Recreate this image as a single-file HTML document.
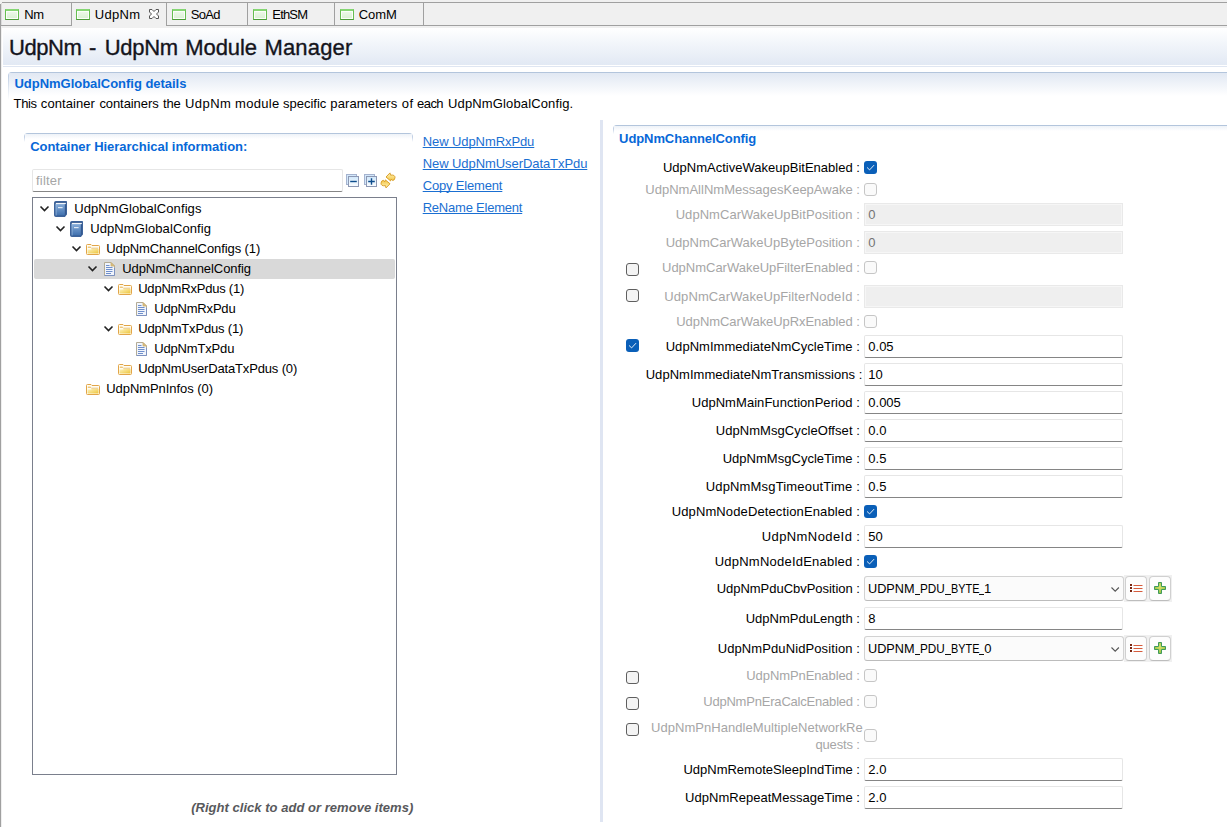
<!DOCTYPE html><html lang="en"><head><meta charset="utf-8"><title>UdpNm - UdpNm Module Manager</title><style>
html,body{margin:0;padding:0}
body{width:1227px;height:827px;position:relative;overflow:hidden;background:#fff;font-family:"Liberation Sans",sans-serif;font-size:13px;color:#000}
div,span,a{position:absolute;box-sizing:border-box}
.t{white-space:nowrap;line-height:normal}
#tabbar{left:0;top:0;width:1227px;height:28px;background:#f0f0f0}
#tabbar .topline{left:2px;top:2px;width:1225px;height:1px;background:#a0a0a0}
#tabbar .botline{top:25px;height:1px;background:#a0a0a0}
.tabsep{top:3px;width:1px;height:22px;background:#a0a0a0}
.ticon{top:9px;width:14px;height:11px;border:1px solid #66be50;border-top:2px solid #86d674;border-bottom-color:#4a9a36;background:linear-gradient(#eef9eb,#d9f0d2);box-shadow:inset 0 0 0 1px #fbfefa}
#leftedge{left:0;top:4px;width:1px;height:823px;background:#a0a0a0}
#leftedge2{left:1px;top:3px;width:1px;height:22px;background:#dcdcdc}
#leftedge3{left:1px;top:26px;width:1px;height:801px;background:#efefef}
#head{left:3px;top:28px;width:1224px;height:37px;background:linear-gradient(#ffffff 0%,#f4f7fb 35%,#e2e9f4 100%)}
#headline{left:3px;top:66px;width:1224px;height:1px;background:#dfe6f2}
.sec{border-top:1px solid #b3c5dc;border-left:1px solid #c0cfe4;border-top-left-radius:4px}
.sec:before{content:'';position:absolute;left:-1px;top:3px;width:1px;bottom:0;background:linear-gradient(rgba(255,255,255,0),#fff)}
.sec.r{border-right:1px solid #c0cfe4;border-top-right-radius:4px}
.sec.r:after{content:'';position:absolute;right:-1px;top:3px;width:1px;bottom:0;background:linear-gradient(rgba(255,255,255,0),#fff)}
.secgrad{left:0;top:0;right:0}
.fld{height:23px;background:#fff;border:1px solid #e6e6e6;border-bottom:1px solid #858585;border-radius:2px}
.fld.dis{background:#efefef;border:1px solid #e9e9e9;box-shadow:inset 0 0 0 1px #f6f6f6;border-radius:0}
.cb{width:13px;height:13px;border-radius:3px}
.cb.on{background:#0a5fb8}
.cb.off{background:#f4f4f4;border:1px solid #5f5f5f}
.cb.dis{background:#fafafa;border:1px solid #c6c6c6}
.combo{height:25px;background:#fbfbfb;border:1px solid #d2d2d2;border-bottom-color:#bcbcbc;border-radius:3px}
.tb{width:48px;height:27px;background:#f0f0f0}
.btn{width:22px;height:25px;background:#fdfdfd;border:1px solid #d0d0d0;border-bottom-color:#bdbdbd;border-radius:4px}
svg{position:absolute;overflow:visible}
</style></head><body>
<div id="tabbar"><div class="topline"></div>
<div class="botline" style="left:0;width:72px"></div><div class="botline" style="left:166px;width:1061px"></div>
<div class="tabsep" style="left:71px"></div>
<div class="tabsep" style="left:166px"></div>
<div class="tabsep" style="left:247px"></div>
<div class="tabsep" style="left:334px"></div>
<div class="tabsep" style="left:423px"></div>
<div class="ticon" style="left:5px"></div>
<div class="ticon" style="left:76px"></div>
<div class="ticon" style="left:172px"></div>
<div class="ticon" style="left:253px"></div>
<div class="ticon" style="left:340px"></div>
<span class="t" style="top:7px;font-size:13px;left:24.2px;letter-spacing:-0.42px;">Nm</span>
<span class="t" style="top:7px;font-size:13px;left:94.7px;letter-spacing:0.36px;">UdpNm</span>
<span class="t" style="top:7px;font-size:13px;left:190.7px;letter-spacing:-0.67px;">SoAd</span>
<span class="t" style="top:7px;font-size:13px;left:272.3px;letter-spacing:-0.83px;">EthSM</span>
<span class="t" style="top:7px;font-size:13px;left:358.7px;letter-spacing:-0.06px;">ComM</span>
<svg style="left:149px;top:9px" width="10" height="10" viewBox="0 0 10 10"><path d="M0.5 0.5 H3 L5 2.5 L7 0.5 H9.5 V3 L7.5 5 L9.5 7 V9.5 H7 L5 7.5 L3 9.5 H0.5 V7 L2.5 5 L0.5 3Z" fill="#fff" stroke="#565656" stroke-width="1"/></svg>
</div>
<div id="leftedge"></div><div id="leftedge2"></div><div id="leftedge3"></div>
<div id="head"></div><div id="headline"></div>
<span class="t" style="top:35px;font-size:22px;color:#14141c;left:8.9px;letter-spacing:-0.39px;-webkit-text-stroke:0.35px #14141c;">UdpNm</span>
<span class="t" style="top:35px;font-size:22px;color:#14141c;left:89.0px;letter-spacing:1.67px;-webkit-text-stroke:0.35px #14141c;">-</span>
<span class="t" style="top:35px;font-size:22px;color:#14141c;left:104.8px;letter-spacing:-0.32px;-webkit-text-stroke:0.35px #14141c;">UdpNm</span>
<span class="t" style="top:35px;font-size:22px;color:#14141c;left:185.2px;letter-spacing:-0.05px;-webkit-text-stroke:0.35px #14141c;">Module</span>
<span class="t" style="top:35px;font-size:22px;color:#14141c;left:264.4px;letter-spacing:0.19px;-webkit-text-stroke:0.35px #14141c;">Manager</span>
<div class="sec" style="left:8px;top:72px;width:1219px;height:28px;"><div class="secgrad" style="height:23px;background:linear-gradient(#e1e8f3,#ffffff)"></div></div>
<span class="t" style="top:76px;font-size:13px;font-weight:bold;color:#0768d8;left:14.5px;letter-spacing:-0.03px;">UdpNmGlobalConfig details</span>
<span class="t" style="top:96px;font-size:13px;left:13.6px;letter-spacing:-0.39px;">This</span>
<span class="t" style="top:96px;font-size:13px;left:40.8px;letter-spacing:0.08px;">container</span>
<span class="t" style="top:96px;font-size:13px;left:99.4px;letter-spacing:-0.08px;">containers</span>
<span class="t" style="top:96px;font-size:13px;left:163.0px;letter-spacing:-0.19px;">the</span>
<span class="t" style="top:96px;font-size:13px;left:185.0px;letter-spacing:0.43px;">UdpNm</span>
<span class="t" style="top:96px;font-size:13px;left:235.1px;letter-spacing:0.29px;">module</span>
<span class="t" style="top:96px;font-size:13px;left:283.1px;letter-spacing:-0.02px;">specific</span>
<span class="t" style="top:96px;font-size:13px;left:330.3px;letter-spacing:0.13px;">parameters</span>
<span class="t" style="top:96px;font-size:13px;left:401.7px;letter-spacing:0.56px;">of</span>
<span class="t" style="top:96px;font-size:13px;left:417.1px;letter-spacing:-0.57px;">each</span>
<span class="t" style="top:96px;font-size:13px;left:448.1px;letter-spacing:0.13px;">UdpNmGlobalConfig.</span>
<div class="sec r" style="left:24px;top:133px;width:389px;height:9px"><div class="secgrad" style="height:5px;background:linear-gradient(#eef2f8,#ffffff)"></div></div>
<span class="t" style="top:139px;font-size:13px;font-weight:bold;color:#0768d8;left:30.2px;letter-spacing:-0.03px;">Container Hierarchical information:</span>
<div class="fld" style="left:32px;top:169px;width:311px"></div>
<span class="t" style="top:173px;font-size:13px;color:#a6a6a6;left:36px;letter-spacing:0.19px;">filter</span>
<svg style="left:346px;top:174px" width="13" height="13" viewBox="0 0 13 13"><defs><linearGradient id="sq" x1="0" y1="0" x2="0" y2="1"><stop offset="0" stop-color="#cfe7fb"/><stop offset="1" stop-color="#fbfdff"/></linearGradient></defs><rect x="0.5" y="0.5" width="10" height="10" fill="#d3e8fb" stroke="#a5b3cf"/><rect x="2.5" y="2.5" width="10" height="10" fill="url(#sq)" stroke="#8d98b3"/><path d="M4.2 7.5 H10.8" stroke="#0d4c8c" stroke-width="1.4"/></svg>
<svg style="left:364px;top:174px" width="13" height="13" viewBox="0 0 13 13"><defs><linearGradient id="sq" x1="0" y1="0" x2="0" y2="1"><stop offset="0" stop-color="#cfe7fb"/><stop offset="1" stop-color="#fbfdff"/></linearGradient></defs><rect x="0.5" y="0.5" width="10" height="10" fill="#d3e8fb" stroke="#a5b3cf"/><rect x="2.5" y="2.5" width="10" height="10" fill="url(#sq)" stroke="#8d98b3"/><path d="M4.2 7.5 H10.8 M7.5 4.2 V10.8" stroke="#0d4c8c" stroke-width="1.4"/></svg>
<svg style="left:380px;top:172px" width="16" height="17" viewBox="0 0 16 17"><defs><linearGradient id="ar" x1="0" y1="0" x2="0" y2="1"><stop offset="0" stop-color="#fff4b8"/><stop offset="1" stop-color="#f3c443"/></linearGradient></defs>
<path d="M6 5 L10 0.9 L10.5 3.1 Q15 2.5 15 5.6 Q14.8 8.3 12.6 8.5 L11.3 7 L10.6 8.9 Z" fill="url(#ar)" stroke="#d6981f" stroke-width="0.9" stroke-linejoin="round"/>
<path transform="rotate(180 8 8.4)" d="M6 5 L10 0.9 L10.5 3.1 Q15 2.5 15 5.6 Q14.8 8.3 12.6 8.5 L11.3 7 L10.6 8.9 Z" fill="url(#ar)" stroke="#d6981f" stroke-width="0.9" stroke-linejoin="round"/></svg>
<div id="tree" style="left:32px;top:197px;width:365px;height:578px;border:1px solid #7a7f8c;background:#fff"></div>
<div style="left:34px;top:259px;width:361px;height:20px;background:#d9d9d9;border-radius:2px"></div>
<svg style="left:40px;top:206px" width="9" height="5.6" viewBox="0 0 9 5.6"><path d="M0.5 0.5 L4.5 4.6 L8.5 0.5" fill="none" stroke="#222222" stroke-width="1.6"/></svg>
<svg style="left:54px;top:201px" width="13" height="16" viewBox="0 0 13 16">
<defs><linearGradient id="bk" x1="0" y1="0" x2="0" y2="1"><stop offset="0" stop-color="#86acd9"/><stop offset="1" stop-color="#3f70ae"/></linearGradient></defs>
<path d="M1.6 0.5 H12.5 V13.2 L11 15.5 H1.6 Q0.5 15.5 0.5 14.4 V1.6 Q0.5 0.5 1.6 0.5Z" fill="#35598f" stroke="#3d639b" stroke-width="1"/>
<rect x="1.5" y="3" width="9.3" height="11.5" fill="url(#bk)"/>
<rect x="1.5" y="3" width="1.2" height="11.5" fill="#9fbde3" opacity=".55"/>
<rect x="1.8" y="1.9" width="10" height="1.2" fill="#f4f7fb"/>
<rect x="4" y="6" width="4.6" height="1.2" fill="#dfe9f5"/>
</svg>
<span class="t" style="top:201px;font-size:13px;left:74.2px;letter-spacing:0.09px;">UdpNmGlobalConfigs</span>
<svg style="left:56px;top:226px" width="9" height="5.6" viewBox="0 0 9 5.6"><path d="M0.5 0.5 L4.5 4.6 L8.5 0.5" fill="none" stroke="#222222" stroke-width="1.6"/></svg>
<svg style="left:70px;top:221px" width="13" height="16" viewBox="0 0 13 16">
<defs><linearGradient id="bk" x1="0" y1="0" x2="0" y2="1"><stop offset="0" stop-color="#86acd9"/><stop offset="1" stop-color="#3f70ae"/></linearGradient></defs>
<path d="M1.6 0.5 H12.5 V13.2 L11 15.5 H1.6 Q0.5 15.5 0.5 14.4 V1.6 Q0.5 0.5 1.6 0.5Z" fill="#35598f" stroke="#3d639b" stroke-width="1"/>
<rect x="1.5" y="3" width="9.3" height="11.5" fill="url(#bk)"/>
<rect x="1.5" y="3" width="1.2" height="11.5" fill="#9fbde3" opacity=".55"/>
<rect x="1.8" y="1.9" width="10" height="1.2" fill="#f4f7fb"/>
<rect x="4" y="6" width="4.6" height="1.2" fill="#dfe9f5"/>
</svg>
<span class="t" style="top:221px;font-size:13px;left:90.2px;letter-spacing:0.1px;">UdpNmGlobalConfig</span>
<svg style="left:72px;top:246px" width="9" height="5.6" viewBox="0 0 9 5.6"><path d="M0.5 0.5 L4.5 4.6 L8.5 0.5" fill="none" stroke="#222222" stroke-width="1.6"/></svg>
<svg style="left:86px;top:244px" width="14" height="11" viewBox="0 0 14 11">
<defs><linearGradient id="fd" x1="0" y1="0" x2="1" y2="1"><stop offset="0" stop-color="#fdf3c0"/><stop offset="1" stop-color="#eec53a"/></linearGradient></defs>
<path d="M0.5 1.4 Q0.5 0.5 1.4 0.5 H5 L6 1.5 H12.6 Q13.5 1.5 13.5 2.4 V9.6 Q13.5 10.5 12.6 10.5 H1.4 Q0.5 10.5 0.5 9.6Z" fill="#fffdf3" stroke="#e2a548" stroke-width="1"/>
<path d="M1.8 3.4 H4.6 L5.4 4.2 H12.2" fill="none" stroke="#e9c27a" stroke-width="1"/>
<path d="M2 2.6 H4.6 V4 H2Z" fill="#efc77a"/>
<path d="M1.5 5.6 L5 5.6 L5.8 4.9 H12.5 V9.6 H1.5Z" fill="url(#fd)"/>
</svg>
<span class="t" style="top:241px;font-size:13px;left:106.2px;letter-spacing:-0.09px;">UdpNmChannelConfigs (1)</span>
<svg style="left:88px;top:266px" width="9" height="5.6" viewBox="0 0 9 5.6"><path d="M0.5 0.5 L4.5 4.6 L8.5 0.5" fill="none" stroke="#222222" stroke-width="1.6"/></svg>
<svg style="left:104px;top:262px" width="11" height="14" viewBox="0 0 11 14">
<path d="M0.5 0.5 H7 L10.5 4 V13.5 H0.5Z" fill="#f1f5fc" stroke="#b3ab96" stroke-width="1"/>
<path d="M0.5 13.5 H10.5 V6" fill="none" stroke="#7d92c0" stroke-width="1"/>
<path d="M7 0.5 L10.5 4 H7Z" fill="#dcbf7c" stroke="#c9ad72" stroke-width="0.8"/>
<path d="M2 3.5 H5.5 M2 5.5 H8.5 M2 7.5 H8.5 M2 9.5 H8.5 M2 11.5 H7" stroke="#6f8fcc" stroke-width="1"/>
</svg>
<span class="t" style="top:261px;font-size:13px;left:122.2px;letter-spacing:-0.07px;">UdpNmChannelConfig</span>
<svg style="left:104px;top:286px" width="9" height="5.6" viewBox="0 0 9 5.6"><path d="M0.5 0.5 L4.5 4.6 L8.5 0.5" fill="none" stroke="#222222" stroke-width="1.6"/></svg>
<svg style="left:118px;top:284px" width="14" height="11" viewBox="0 0 14 11">
<defs><linearGradient id="fd" x1="0" y1="0" x2="1" y2="1"><stop offset="0" stop-color="#fdf3c0"/><stop offset="1" stop-color="#eec53a"/></linearGradient></defs>
<path d="M0.5 1.4 Q0.5 0.5 1.4 0.5 H5 L6 1.5 H12.6 Q13.5 1.5 13.5 2.4 V9.6 Q13.5 10.5 12.6 10.5 H1.4 Q0.5 10.5 0.5 9.6Z" fill="#fffdf3" stroke="#e2a548" stroke-width="1"/>
<path d="M1.8 3.4 H4.6 L5.4 4.2 H12.2" fill="none" stroke="#e9c27a" stroke-width="1"/>
<path d="M2 2.6 H4.6 V4 H2Z" fill="#efc77a"/>
<path d="M1.5 5.6 L5 5.6 L5.8 4.9 H12.5 V9.6 H1.5Z" fill="url(#fd)"/>
</svg>
<span class="t" style="top:281px;font-size:13px;left:138.2px;letter-spacing:-0.21px;">UdpNmRxPdus (1)</span>
<svg style="left:136px;top:302px" width="11" height="14" viewBox="0 0 11 14">
<path d="M0.5 0.5 H7 L10.5 4 V13.5 H0.5Z" fill="#f1f5fc" stroke="#b3ab96" stroke-width="1"/>
<path d="M0.5 13.5 H10.5 V6" fill="none" stroke="#7d92c0" stroke-width="1"/>
<path d="M7 0.5 L10.5 4 H7Z" fill="#dcbf7c" stroke="#c9ad72" stroke-width="0.8"/>
<path d="M2 3.5 H5.5 M2 5.5 H8.5 M2 7.5 H8.5 M2 9.5 H8.5 M2 11.5 H7" stroke="#6f8fcc" stroke-width="1"/>
</svg>
<span class="t" style="top:301px;font-size:13px;left:154.2px;letter-spacing:-0.18px;">UdpNmRxPdu</span>
<svg style="left:104px;top:326px" width="9" height="5.6" viewBox="0 0 9 5.6"><path d="M0.5 0.5 L4.5 4.6 L8.5 0.5" fill="none" stroke="#222222" stroke-width="1.6"/></svg>
<svg style="left:118px;top:324px" width="14" height="11" viewBox="0 0 14 11">
<defs><linearGradient id="fd" x1="0" y1="0" x2="1" y2="1"><stop offset="0" stop-color="#fdf3c0"/><stop offset="1" stop-color="#eec53a"/></linearGradient></defs>
<path d="M0.5 1.4 Q0.5 0.5 1.4 0.5 H5 L6 1.5 H12.6 Q13.5 1.5 13.5 2.4 V9.6 Q13.5 10.5 12.6 10.5 H1.4 Q0.5 10.5 0.5 9.6Z" fill="#fffdf3" stroke="#e2a548" stroke-width="1"/>
<path d="M1.8 3.4 H4.6 L5.4 4.2 H12.2" fill="none" stroke="#e9c27a" stroke-width="1"/>
<path d="M2 2.6 H4.6 V4 H2Z" fill="#efc77a"/>
<path d="M1.5 5.6 L5 5.6 L5.8 4.9 H12.5 V9.6 H1.5Z" fill="url(#fd)"/>
</svg>
<span class="t" style="top:321px;font-size:13px;left:138.2px;letter-spacing:-0.18px;">UdpNmTxPdus (1)</span>
<svg style="left:136px;top:342px" width="11" height="14" viewBox="0 0 11 14">
<path d="M0.5 0.5 H7 L10.5 4 V13.5 H0.5Z" fill="#f1f5fc" stroke="#b3ab96" stroke-width="1"/>
<path d="M0.5 13.5 H10.5 V6" fill="none" stroke="#7d92c0" stroke-width="1"/>
<path d="M7 0.5 L10.5 4 H7Z" fill="#dcbf7c" stroke="#c9ad72" stroke-width="0.8"/>
<path d="M2 3.5 H5.5 M2 5.5 H8.5 M2 7.5 H8.5 M2 9.5 H8.5 M2 11.5 H7" stroke="#6f8fcc" stroke-width="1"/>
</svg>
<span class="t" style="top:341px;font-size:13px;left:154.2px;letter-spacing:-0.16px;">UdpNmTxPdu</span>
<svg style="left:118px;top:364px" width="14" height="11" viewBox="0 0 14 11">
<defs><linearGradient id="fd" x1="0" y1="0" x2="1" y2="1"><stop offset="0" stop-color="#fdf3c0"/><stop offset="1" stop-color="#eec53a"/></linearGradient></defs>
<path d="M0.5 1.4 Q0.5 0.5 1.4 0.5 H5 L6 1.5 H12.6 Q13.5 1.5 13.5 2.4 V9.6 Q13.5 10.5 12.6 10.5 H1.4 Q0.5 10.5 0.5 9.6Z" fill="#fffdf3" stroke="#e2a548" stroke-width="1"/>
<path d="M1.8 3.4 H4.6 L5.4 4.2 H12.2" fill="none" stroke="#e9c27a" stroke-width="1"/>
<path d="M2 2.6 H4.6 V4 H2Z" fill="#efc77a"/>
<path d="M1.5 5.6 L5 5.6 L5.8 4.9 H12.5 V9.6 H1.5Z" fill="url(#fd)"/>
</svg>
<span class="t" style="top:361px;font-size:13px;left:138.2px;letter-spacing:-0.16px;">UdpNmUserDataTxPdus (0)</span>
<svg style="left:86px;top:384px" width="14" height="11" viewBox="0 0 14 11">
<defs><linearGradient id="fd" x1="0" y1="0" x2="1" y2="1"><stop offset="0" stop-color="#fdf3c0"/><stop offset="1" stop-color="#eec53a"/></linearGradient></defs>
<path d="M0.5 1.4 Q0.5 0.5 1.4 0.5 H5 L6 1.5 H12.6 Q13.5 1.5 13.5 2.4 V9.6 Q13.5 10.5 12.6 10.5 H1.4 Q0.5 10.5 0.5 9.6Z" fill="#fffdf3" stroke="#e2a548" stroke-width="1"/>
<path d="M1.8 3.4 H4.6 L5.4 4.2 H12.2" fill="none" stroke="#e9c27a" stroke-width="1"/>
<path d="M2 2.6 H4.6 V4 H2Z" fill="#efc77a"/>
<path d="M1.5 5.6 L5 5.6 L5.8 4.9 H12.5 V9.6 H1.5Z" fill="url(#fd)"/>
</svg>
<span class="t" style="top:381px;font-size:13px;left:106.2px;letter-spacing:-0.05px;">UdpNmPnInfos (0)</span>
<span class="t" style="top:134px;font-size:13px;color:#1a6fd2;text-decoration:underline;left:422.7px;letter-spacing:-0.08px;text-underline-offset:1px;text-decoration-skip-ink:none;text-decoration-thickness:1px;">New UdpNmRxPdu</span>
<span class="t" style="top:156px;font-size:13px;color:#1a6fd2;text-decoration:underline;left:422.7px;letter-spacing:-0.07px;text-underline-offset:1px;text-decoration-skip-ink:none;text-decoration-thickness:1px;">New UdpNmUserDataTxPdu</span>
<span class="t" style="top:178px;font-size:13px;color:#1a6fd2;text-decoration:underline;left:422.7px;letter-spacing:-0.17px;text-underline-offset:1px;text-decoration-skip-ink:none;text-decoration-thickness:1px;">Copy Element</span>
<span class="t" style="top:200px;font-size:13px;color:#1a6fd2;text-decoration:underline;left:422.7px;letter-spacing:-0.22px;text-underline-offset:1px;text-decoration-skip-ink:none;text-decoration-thickness:1px;">ReName Element</span>
<span class="t" style="top:800px;font-size:13px;font-weight:bold;font-style:italic;color:#58595c;left:191.2px;letter-spacing:0.03px;">(Right click to add or remove items)</span>
<div style="left:600px;top:120px;width:3px;height:702px;background:#dfe5f2"></div>
<div class="sec" style="left:613px;top:125px;width:614px;height:9px"><div class="secgrad" style="height:5px;background:linear-gradient(#eef2f8,#ffffff)"></div></div>
<span class="t" style="top:131px;font-size:13px;font-weight:bold;color:#0768d8;left:619.1px;letter-spacing:-0.09px;">UdpNmChannelConfig</span>
<span class="t" style="top:160px;font-size:13px;left:662.9px;letter-spacing:0.01px;">UdpNmActiveWakeupBitEnabled :</span>
<div class="cb on" style="left:864px;top:161px"><svg width="13" height="13" viewBox="0 0 13 13"><path d="M3.3 6.7 L5.6 8.9 L9.8 4.4" fill="none" stroke="#fff" stroke-opacity=".92" stroke-width="0.95" stroke-linecap="round" stroke-linejoin="round"/></svg></div>
<span class="t" style="top:182px;font-size:13px;color:#a6a6a6;left:645.3px;letter-spacing:0.01px;">UdpNmAllNmMessagesKeepAwake :</span>
<div class="cb dis" style="left:864px;top:183px"></div>
<span class="t" style="top:207px;font-size:13px;color:#a6a6a6;left:675.7px;letter-spacing:0.04px;">UdpNmCarWakeUpBitPosition :</span>
<div class="fld dis" style="left:864px;top:203px;width:259px"></div>
<span class="t" style="top:207px;font-size:13px;color:#747474;left:868.3px;">0</span>
<span class="t" style="top:235px;font-size:13px;color:#a6a6a6;left:665.7px;letter-spacing:0.01px;">UdpNmCarWakeUpBytePosition :</span>
<div class="fld dis" style="left:864px;top:231px;width:259px"></div>
<span class="t" style="top:235px;font-size:13px;color:#747474;left:868.3px;">0</span>
<div class="cb off" style="left:626px;top:263px"></div>
<span class="t" style="top:260px;font-size:13px;color:#a6a6a6;left:662.0px;letter-spacing:-0.01px;">UdpNmCarWakeUpFilterEnabled :</span>
<div class="cb dis" style="left:864px;top:261px"></div>
<div class="cb off" style="left:626px;top:289px"></div>
<span class="t" style="top:289px;font-size:13px;color:#a6a6a6;left:664.2px;letter-spacing:0.12px;">UdpNmCarWakeUpFilterNodeId :</span>
<div class="fld dis" style="left:864px;top:285px;width:259px"></div>
<span class="t" style="top:314px;font-size:13px;color:#a6a6a6;left:676.3px;letter-spacing:-0.07px;">UdpNmCarWakeUpRxEnabled :</span>
<div class="cb dis" style="left:864px;top:315px"></div>
<div class="cb on" style="left:626px;top:339px"><svg width="13" height="13" viewBox="0 0 13 13"><path d="M3.3 6.7 L5.6 8.9 L9.8 4.4" fill="none" stroke="#fff" stroke-opacity=".92" stroke-width="0.95" stroke-linecap="round" stroke-linejoin="round"/></svg></div>
<span class="t" style="top:339px;font-size:13px;left:665.7px;letter-spacing:0.04px;">UdpNmImmediateNmCycleTime :</span>
<div class="fld" style="left:864px;top:335px;width:259px"></div>
<span class="t" style="top:339px;font-size:13px;left:868.3px;">0.05</span>
<span class="t" style="top:367px;font-size:13px;left:645.7px;letter-spacing:0.04px;">UdpNmImmediateNmTransmissions :</span>
<div class="fld" style="left:864px;top:363px;width:259px"></div>
<span class="t" style="top:367px;font-size:13px;left:868.3px;">10</span>
<span class="t" style="top:395px;font-size:13px;left:691.7px;letter-spacing:0.05px;">UdpNmMainFunctionPeriod :</span>
<div class="fld" style="left:864px;top:391px;width:259px"></div>
<span class="t" style="top:395px;font-size:13px;left:868.3px;">0.005</span>
<span class="t" style="top:423px;font-size:13px;left:715.7px;letter-spacing:0.07px;">UdpNmMsgCycleOffset :</span>
<div class="fld" style="left:864px;top:419px;width:259px"></div>
<span class="t" style="top:423px;font-size:13px;left:868.3px;">0.0</span>
<span class="t" style="top:451px;font-size:13px;left:722.7px;letter-spacing:0.02px;">UdpNmMsgCycleTime :</span>
<div class="fld" style="left:864px;top:447px;width:259px"></div>
<span class="t" style="top:451px;font-size:13px;left:868.3px;">0.5</span>
<span class="t" style="top:479px;font-size:13px;left:705.7px;letter-spacing:0.17px;">UdpNmMsgTimeoutTime :</span>
<div class="fld" style="left:864px;top:475px;width:259px"></div>
<span class="t" style="top:479px;font-size:13px;left:868.3px;">0.5</span>
<span class="t" style="top:504px;font-size:13px;left:671.7px;letter-spacing:0.12px;">UdpNmNodeDetectionEnabled :</span>
<div class="cb on" style="left:864px;top:505px"><svg width="13" height="13" viewBox="0 0 13 13"><path d="M3.3 6.7 L5.6 8.9 L9.8 4.4" fill="none" stroke="#fff" stroke-opacity=".92" stroke-width="0.95" stroke-linecap="round" stroke-linejoin="round"/></svg></div>
<span class="t" style="top:529px;font-size:13px;left:761.7px;letter-spacing:0.42px;">UdpNmNodeId :</span>
<div class="fld" style="left:864px;top:525px;width:259px"></div>
<span class="t" style="top:529px;font-size:13px;left:868.3px;">50</span>
<span class="t" style="top:554px;font-size:13px;left:714.7px;letter-spacing:0.23px;">UdpNmNodeIdEnabled :</span>
<div class="cb on" style="left:864px;top:555px"><svg width="13" height="13" viewBox="0 0 13 13"><path d="M3.3 6.7 L5.6 8.9 L9.8 4.4" fill="none" stroke="#fff" stroke-opacity=".92" stroke-width="0.95" stroke-linecap="round" stroke-linejoin="round"/></svg></div>
<span class="t" style="top:581px;font-size:13px;left:716.7px;letter-spacing:-0.03px;">UdpNmPduCbvPosition :</span>
<div class="combo" style="left:864px;top:576px;width:260px"></div>
<span class="t" style="top:581px;font-size:13px;left:867.7px;transform:scaleX(0.9775);transform-origin:0 0;">UDPNM</span>
<span class="t" style="top:581px;font-size:13px;left:920.2px;transform:scaleX(0.9034);transform-origin:0 0;">PDU</span>
<span class="t" style="top:581px;font-size:13px;left:950.5px;transform:scaleX(0.8361);transform-origin:0 0;">BYTE</span>
<span class="t" style="top:581px;font-size:13px;left:983.9px;">1</span>
<div style="left:914.7px;top:594.2px;width:5.7px;height:1.3px;background:#111"></div>
<div style="left:945.3px;top:594.2px;width:5.5px;height:1.3px;background:#111"></div>
<div style="left:978.8px;top:594.2px;width:5.6px;height:1.3px;background:#111"></div>
<svg style="left:1111px;top:586.5px" width="8.4" height="5.2" viewBox="0 0 8.4 5.2"><path d="M0.5 0.5 L4.2 4.2 L7.9 0.5" fill="none" stroke="#555" stroke-width="1.1"/></svg>
<div class="tb" style="left:1124px;top:575px"></div>
<div class="btn" style="left:1125px;top:576px"></div><div class="btn" style="left:1149px;top:576px"></div>
<svg style="left:1130px;top:584px" width="13" height="9" viewBox="0 0 13 9"><path d="M0 1 H2 M0 4 H2 M0 7 H2" stroke="#7a2410" stroke-width="2"/><path d="M3.5 1.5 H12.5 M3.5 4.5 H12.5 M3.5 7.5 H12.5" stroke="#d65c3c" stroke-width="1"/></svg>
<svg style="left:1154px;top:582px" width="12" height="12" viewBox="0 0 12 12"><defs><radialGradient id="pg576" cx=".5" cy=".4" r=".6"><stop offset="0" stop-color="#d9e36a"/><stop offset="1" stop-color="#8fbf3f"/></radialGradient></defs><path d="M4.5 0.5 H7.5 V4.5 H11.5 V7.5 H7.5 V11.5 H4.5 V7.5 H0.5 V4.5 H4.5Z" fill="url(#pg576)" stroke="#3f9a5c" stroke-width="1"/></svg>
<span class="t" style="top:611px;font-size:13px;left:745.7px;">UdpNmPduLength :</span>
<div class="fld" style="left:864px;top:607px;width:259px"></div>
<span class="t" style="top:611px;font-size:13px;left:868.3px;">8</span>
<span class="t" style="top:641px;font-size:13px;left:717.7px;letter-spacing:0.1px;">UdpNmPduNidPosition :</span>
<div class="combo" style="left:864px;top:636px;width:260px"></div>
<span class="t" style="top:641px;font-size:13px;left:867.7px;transform:scaleX(0.9775);transform-origin:0 0;">UDPNM</span>
<span class="t" style="top:641px;font-size:13px;left:920.2px;transform:scaleX(0.9034);transform-origin:0 0;">PDU</span>
<span class="t" style="top:641px;font-size:13px;left:950.5px;transform:scaleX(0.8361);transform-origin:0 0;">BYTE</span>
<span class="t" style="top:641px;font-size:13px;left:984.3px;">0</span>
<div style="left:914.7px;top:654.2px;width:5.7px;height:1.3px;background:#111"></div>
<div style="left:945.3px;top:654.2px;width:5.5px;height:1.3px;background:#111"></div>
<div style="left:978.8px;top:654.2px;width:5.6px;height:1.3px;background:#111"></div>
<svg style="left:1111px;top:646.5px" width="8.4" height="5.2" viewBox="0 0 8.4 5.2"><path d="M0.5 0.5 L4.2 4.2 L7.9 0.5" fill="none" stroke="#555" stroke-width="1.1"/></svg>
<div class="tb" style="left:1124px;top:635px"></div>
<div class="btn" style="left:1125px;top:636px"></div><div class="btn" style="left:1149px;top:636px"></div>
<svg style="left:1130px;top:644px" width="13" height="9" viewBox="0 0 13 9"><path d="M0 1 H2 M0 4 H2 M0 7 H2" stroke="#7a2410" stroke-width="2"/><path d="M3.5 1.5 H12.5 M3.5 4.5 H12.5 M3.5 7.5 H12.5" stroke="#d65c3c" stroke-width="1"/></svg>
<svg style="left:1154px;top:642px" width="12" height="12" viewBox="0 0 12 12"><defs><radialGradient id="pg636" cx=".5" cy=".4" r=".6"><stop offset="0" stop-color="#d9e36a"/><stop offset="1" stop-color="#8fbf3f"/></radialGradient></defs><path d="M4.5 0.5 H7.5 V4.5 H11.5 V7.5 H7.5 V11.5 H4.5 V7.5 H0.5 V4.5 H4.5Z" fill="url(#pg636)" stroke="#3f9a5c" stroke-width="1"/></svg>
<div class="cb off" style="left:626px;top:671px"></div>
<span class="t" style="top:668px;font-size:13px;color:#a6a6a6;left:746.3px;letter-spacing:-0.09px;">UdpNmPnEnabled :</span>
<div class="cb dis" style="left:864px;top:669px"></div>
<div class="cb off" style="left:626px;top:697px"></div>
<span class="t" style="top:694px;font-size:13px;color:#a6a6a6;left:703.2px;letter-spacing:-0.2px;">UdpNmPnEraCalcEnabled :</span>
<div class="cb dis" style="left:864px;top:695px"></div>
<div class="cb off" style="left:626px;top:723px"></div>
<span class="t" style="top:720px;font-size:13px;color:#a6a6a6;left:651.0px;letter-spacing:0.05px;">UdpNmPnHandleMultipleNetworkRe</span>
<span class="t" style="top:737px;font-size:13px;color:#a6a6a6;left:815.4px;letter-spacing:-0.15px;">quests :</span>
<div class="cb dis" style="left:864px;top:729px"></div>
<span class="t" style="top:762px;font-size:13px;left:683.4px;">UdpNmRemoteSleepIndTime :</span>
<div class="fld" style="left:864px;top:758px;width:259px"></div>
<span class="t" style="top:762px;font-size:13px;left:868.3px;">2.0</span>
<span class="t" style="top:790px;font-size:13px;left:685.1px;letter-spacing:0.02px;">UdpNmRepeatMessageTime :</span>
<div class="fld" style="left:864px;top:786px;width:259px"></div>
<span class="t" style="top:790px;font-size:13px;left:868.3px;">2.0</span>
</body></html>
